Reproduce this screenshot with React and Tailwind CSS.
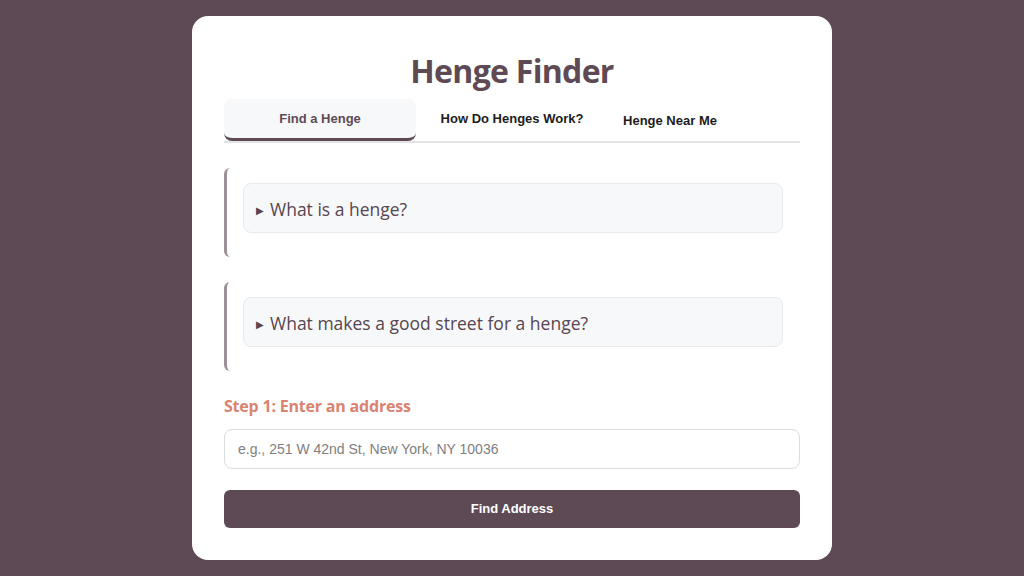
import { useState } from "react";

const tabs = ["Find a Henge", "How Do Henges Work?", "Henge Near Me"];
const faqs = ["What is a henge?", "What makes a good street for a henge?"];

function App() {
  const [active, setActive] = useState(0);
  const [address, setAddress] = useState("");

  return (
    <div className="min-h-screen bg-[#5e4a55] flex justify-center pt-4 font-['Liberation_Sans',Arial,sans-serif]">
      <div className="w-[640px] h-[544px] bg-white rounded-2xl px-8 pt-[35px]">
        <h1 className="text-center text-[32px] leading-[40px] font-bold text-[#5e4a55] font-['Open_Sans',sans-serif] tracking-[-0.7px]">
          Henge Finder
        </h1>

        {/* Tabs */}
        <div className="flex mt-2 border-b-2 border-[#e4e4e6]">
          {tabs.map((t, i) => (
            <button
              key={t}
              onClick={() => setActive(i)}
              className={`h-[42px] text-[13px] font-bold text-center ${
                i === 0 ? "w-48" : i === 1 ? "w-48 pb-[2px]" : "w-[124px] pt-[1px]"
              } ${
                active === i
                  ? "bg-[#f7f8fa] text-[#5e4a55] rounded-lg border-b-[3px] border-[#5e4a55] -mb-[1px]"
                  : "text-[#1c1c1c]"
              }`}
            >
              {t}
            </button>
          ))}
        </div>

        {/* FAQ */}
        <div className="mt-[25px] flex flex-col gap-[25px]">
          {faqs.map((q) => (
            <div
              key={q}
              className="border-l-[3px] border-[#9d8f97] rounded-l-md pl-4 pr-[17px] pt-[15px] pb-6"
            >
              <div className="h-[50px] bg-[#f7f8fa] border border-[#e8e9ec] rounded-lg flex items-center px-3 pt-[2px] text-[#574550] font-['Open_Sans',sans-serif] text-[17.5px]">
                <span className="text-[10px] mr-[6px] mt-[2px]">▶</span>
                {q}
              </div>
            </div>
          ))}
        </div>

        {/* Step 1 */}
        <h2 className="mt-[25px] text-[16px] font-bold text-[#d98370] font-['Open_Sans',sans-serif] leading-5 tracking-[-0.2px]">
          Step 1: Enter an address
        </h2>
        <input
          value={address}
          onChange={(e) => setAddress(e.target.value)}
          placeholder="e.g., 251 W 42nd St, New York, NY 10036"
          className="mt-[13px] w-full h-10 border border-[#dcdcdf] rounded-lg px-[13px] text-[14px] placeholder:text-[#808080] outline-none"
        />
        <button className="mt-[21px] w-full h-[38px] bg-[#5e4a55] text-white text-[13px] font-bold rounded-md">
          Find Address
        </button>
      </div>
    </div>
  );
}

export default App;
